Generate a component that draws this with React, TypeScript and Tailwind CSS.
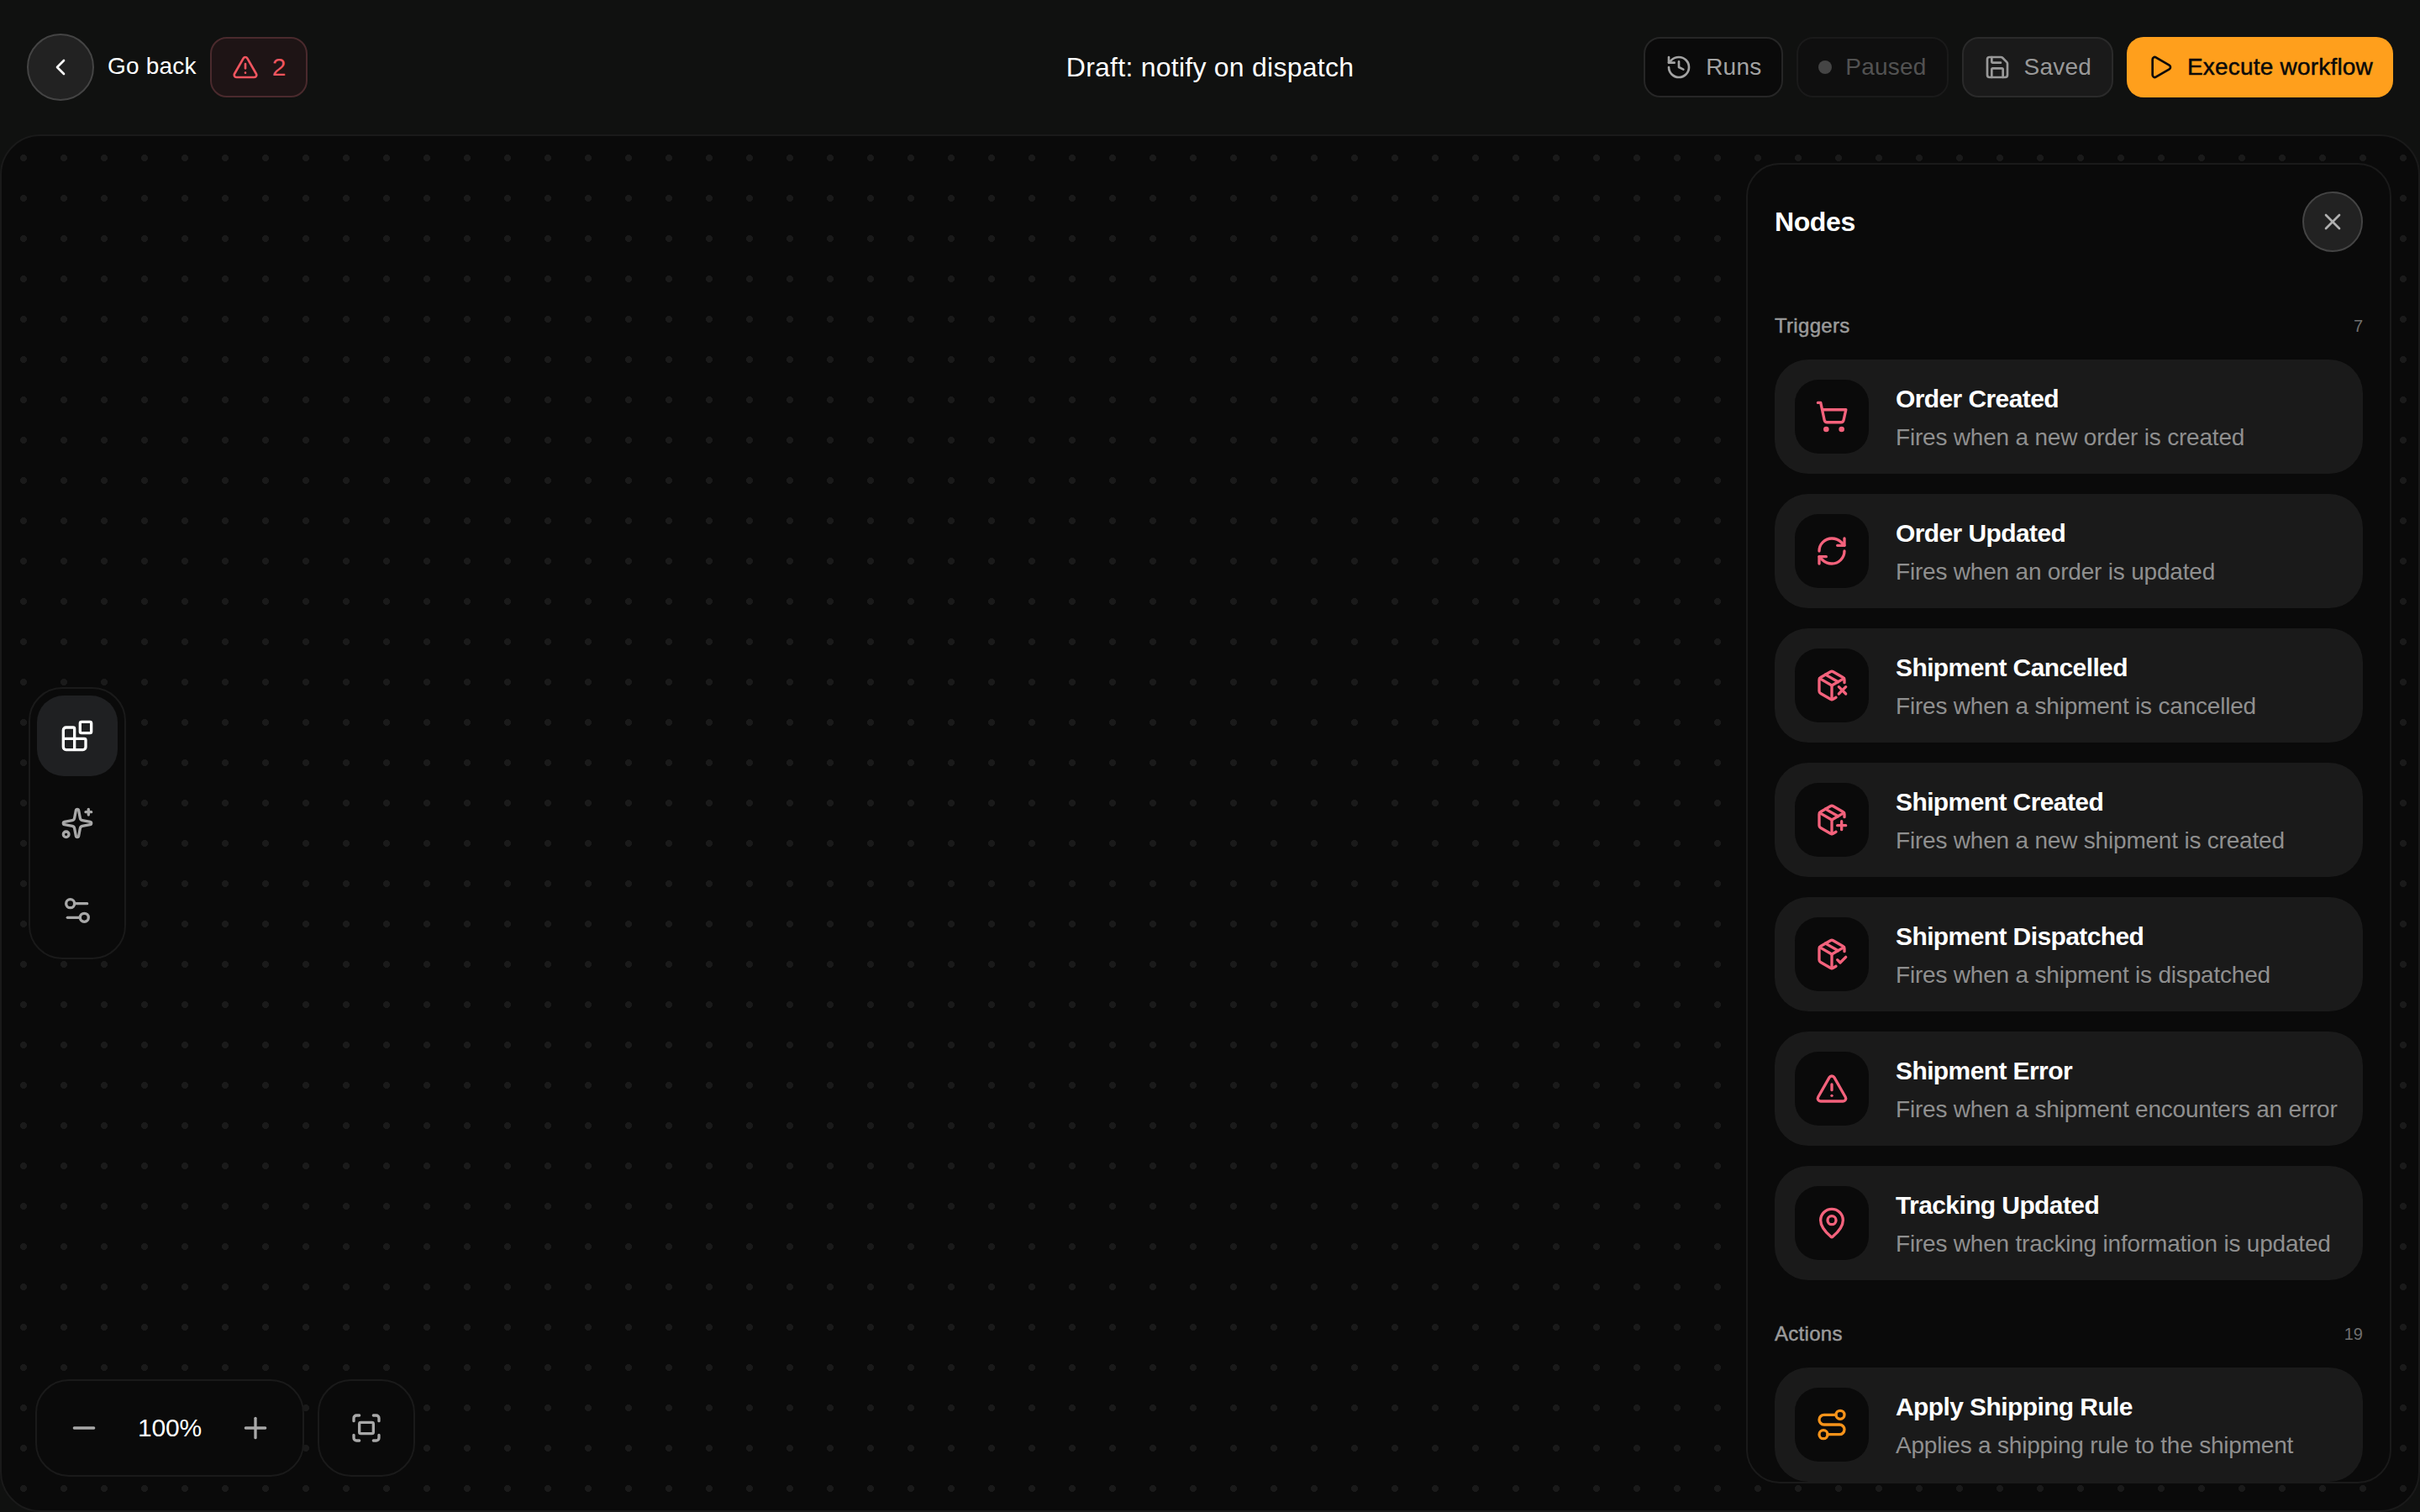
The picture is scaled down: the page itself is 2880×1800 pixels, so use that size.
import React from "react";
import {
  ChevronLeft, TriangleAlert, History, Save, Play, X, Blocks, Sparkles, Settings2, Minus, Plus, Fullscreen,
  ShoppingCart, RefreshCw, PackageX, PackagePlus, PackageCheck, MapPin, Route,
} from "lucide-react";

const triggers = [
  { icon: ShoppingCart, title: "Order Created", desc: "Fires when a new order is created" },
  { icon: RefreshCw, title: "Order Updated", desc: "Fires when an order is updated" },
  { icon: PackageX, title: "Shipment Cancelled", desc: "Fires when a shipment is cancelled" },
  { icon: PackagePlus, title: "Shipment Created", desc: "Fires when a new shipment is created" },
  { icon: PackageCheck, title: "Shipment Dispatched", desc: "Fires when a shipment is dispatched" },
  { icon: TriangleAlert, title: "Shipment Error", desc: "Fires when a shipment encounters an error" },
  { icon: MapPin, title: "Tracking Updated", desc: "Fires when tracking information is updated" },
];

function NodeCard({ icon: Icon, title, desc, tone }: { icon: React.ComponentType<any>; title: string; desc: string; tone: string }) {
  return (
    <div className="flex h-[136px] shrink-0 items-center gap-8 rounded-[40px] bg-[#1a1a1a] px-6">
      <div className="flex size-[88px] shrink-0 items-center justify-center rounded-[28px] bg-[#0a0a0a]">
        <Icon className={tone} size={40} strokeWidth={2} />
      </div>
      <div className="flex min-w-0 flex-col gap-[14px] pt-[3px]">
        <div className="text-[30px] leading-[32px] font-bold tracking-[-0.6px] text-white">{title}</div>
        <div className="whitespace-nowrap text-[28px] leading-[32px] tracking-[-0.2px] text-[#8f8f8f]">{desc}</div>
      </div>
    </div>
  );
}

function SectionHead({ label, count }: { label: string; count: number }) {
  return (
    <div className="mb-6 flex h-8 items-center justify-between">
      <span className="text-[24px] tracking-[0.3px] text-[#9a9a9a] [-webkit-text-stroke:0.5px_#9a9a9a]">{label}</span>
      <span className="text-[20px] text-[#6f6f6f]">{count}</span>
    </div>
  );
}

export default function App() {
  return (
    <div className="flex h-screen w-full flex-col overflow-hidden bg-[#101110] font-['Liberation_Sans',Arial,sans-serif] text-white">
      <header className="grid h-[160px] shrink-0 grid-cols-[1fr_auto_1fr] items-center pl-8 pr-8">
        <div className="flex items-center">
          <button className="flex size-20 items-center justify-center rounded-full border-2 border-[#444444] bg-[#222222]">
            <ChevronLeft size={32} strokeWidth={2} className="text-white" />
          </button>
          <span className="ml-4 pb-[2px] text-[28px] tracking-[0.2px] text-white">Go back</span>
          <div className="ml-4 flex h-[72px] items-center gap-4 rounded-[20px] border-2 border-[#4a2a2d] bg-[#1e1415] px-6">
            <TriangleAlert size={32} strokeWidth={2} className="text-[#f0555f]" />
            <span className="pb-[2px] text-[30px] text-[#f0555f]">2</span>
          </div>
        </div>
        <div className="pb-[1px] text-[32px] tracking-[0.25px] text-white">Draft: notify on dispatch</div>
        <div className="flex items-center justify-end gap-4 tracking-[0.2px]">
          <button className="flex h-[72px] items-center gap-4 rounded-[20px] border-2 border-[#262626] bg-[#0a0a0a] px-6 text-[28px] text-[#a3a3a3]">
            <History size={32} strokeWidth={2} />
            Runs
          </button>
          <div className="flex h-[72px] items-center gap-4 rounded-[20px] border-2 border-[#1a1a1a] bg-[#0f0f0f] px-6 text-[28px] text-[#525252]">
            <span className="size-4 rounded-full bg-[#454545]" />
            Paused
          </div>
          <button className="flex h-[72px] items-center gap-4 rounded-[20px] border-2 border-[#2a2a2a] bg-[#1a1a1a] px-6 text-[28px] text-[#999999]">
            <Save size={32} strokeWidth={2} />
            Saved
          </button>
          <button className="flex h-[72px] items-center gap-4 rounded-[20px] bg-[#ff9f1c] px-6 text-[28px] text-[#0a0a0a] [-webkit-text-stroke:0.5px_#0a0a0a]">
            <Play size={32} strokeWidth={2} />
            Execute workflow
          </button>
        </div>
      </header>

      <main className="relative flex-1 overflow-hidden rounded-[48px] border-2 border-[#1a1a1a] bg-[#0a0a0a] bg-[radial-gradient(circle,#1a1a1a_3.75px,transparent_4.25px)] bg-[size:48px_48px] bg-[position:2px_2px]">
        <div className="absolute left-8 top-1/2 flex -translate-y-1/2 flex-col gap-2 rounded-[40px] border-2 border-[#1a1a1a] bg-[#0a0a0a] p-2">
          <button className="flex size-24 items-center justify-center rounded-[32px] bg-[#1f2022] text-white">
            <Blocks size={40} strokeWidth={2} />
          </button>
          <button className="flex size-24 items-center justify-center rounded-[32px] text-[#a8a8a8]">
            <Sparkles size={40} strokeWidth={2} />
          </button>
          <button className="flex size-24 items-center justify-center rounded-[32px] text-[#a8a8a8]">
            <Settings2 size={40} strokeWidth={2} />
          </button>
        </div>

        <div className="absolute bottom-10 left-10 flex items-center gap-4">
          <div className="flex items-center rounded-[40px] border-2 border-[#1a1a1a] bg-[#0a0a0a] p-2">
            <button className="flex size-24 items-center justify-center text-[#a8a8a8]">
              <Minus size={40} strokeWidth={2} />
            </button>
            <span className="flex w-[108px] justify-center pb-[2px] text-[30px] tracking-[-0.2px] text-white">100%</span>
            <button className="flex size-24 items-center justify-center text-[#a8a8a8]">
              <Plus size={40} strokeWidth={2} />
            </button>
          </div>
          <div className="rounded-[40px] border-2 border-[#1a1a1a] bg-[#0a0a0a] p-2">
            <button className="flex size-24 items-center justify-center text-[#a8a8a8]">
              <Fullscreen size={40} strokeWidth={2} />
            </button>
          </div>
        </div>

        <aside className="absolute bottom-8 right-8 top-8 flex w-[768px] flex-col overflow-hidden rounded-[40px] border-2 border-[#1a1a1a] bg-[#0a0a0a] px-8">
          <div className="mt-8 flex h-[72px] shrink-0 items-center justify-between">
            <span className="text-[32px] font-bold tracking-[-0.4px] text-white">Nodes</span>
            <button className="flex size-[72px] items-center justify-center rounded-full border-2 border-[#444444] bg-[#222222] text-[#b0b0b0]">
              <X size={32} strokeWidth={2} />
            </button>
          </div>
          <div className="mt-[72px] flex flex-col">
            <SectionHead label="Triggers" count={7} />
            <div className="flex flex-col gap-6">
              {triggers.map((t) => (
                <NodeCard key={t.title} {...t} tone="text-[#f4627c]" />
              ))}
            </div>
            <div className="mt-12">
              <SectionHead label="Actions" count={19} />
              <NodeCard icon={Route} title="Apply Shipping Rule" desc="Applies a shipping rule to the shipment" tone="text-[#f7931a]" />
            </div>
          </div>
        </aside>
      </main>
    </div>
  );
}
